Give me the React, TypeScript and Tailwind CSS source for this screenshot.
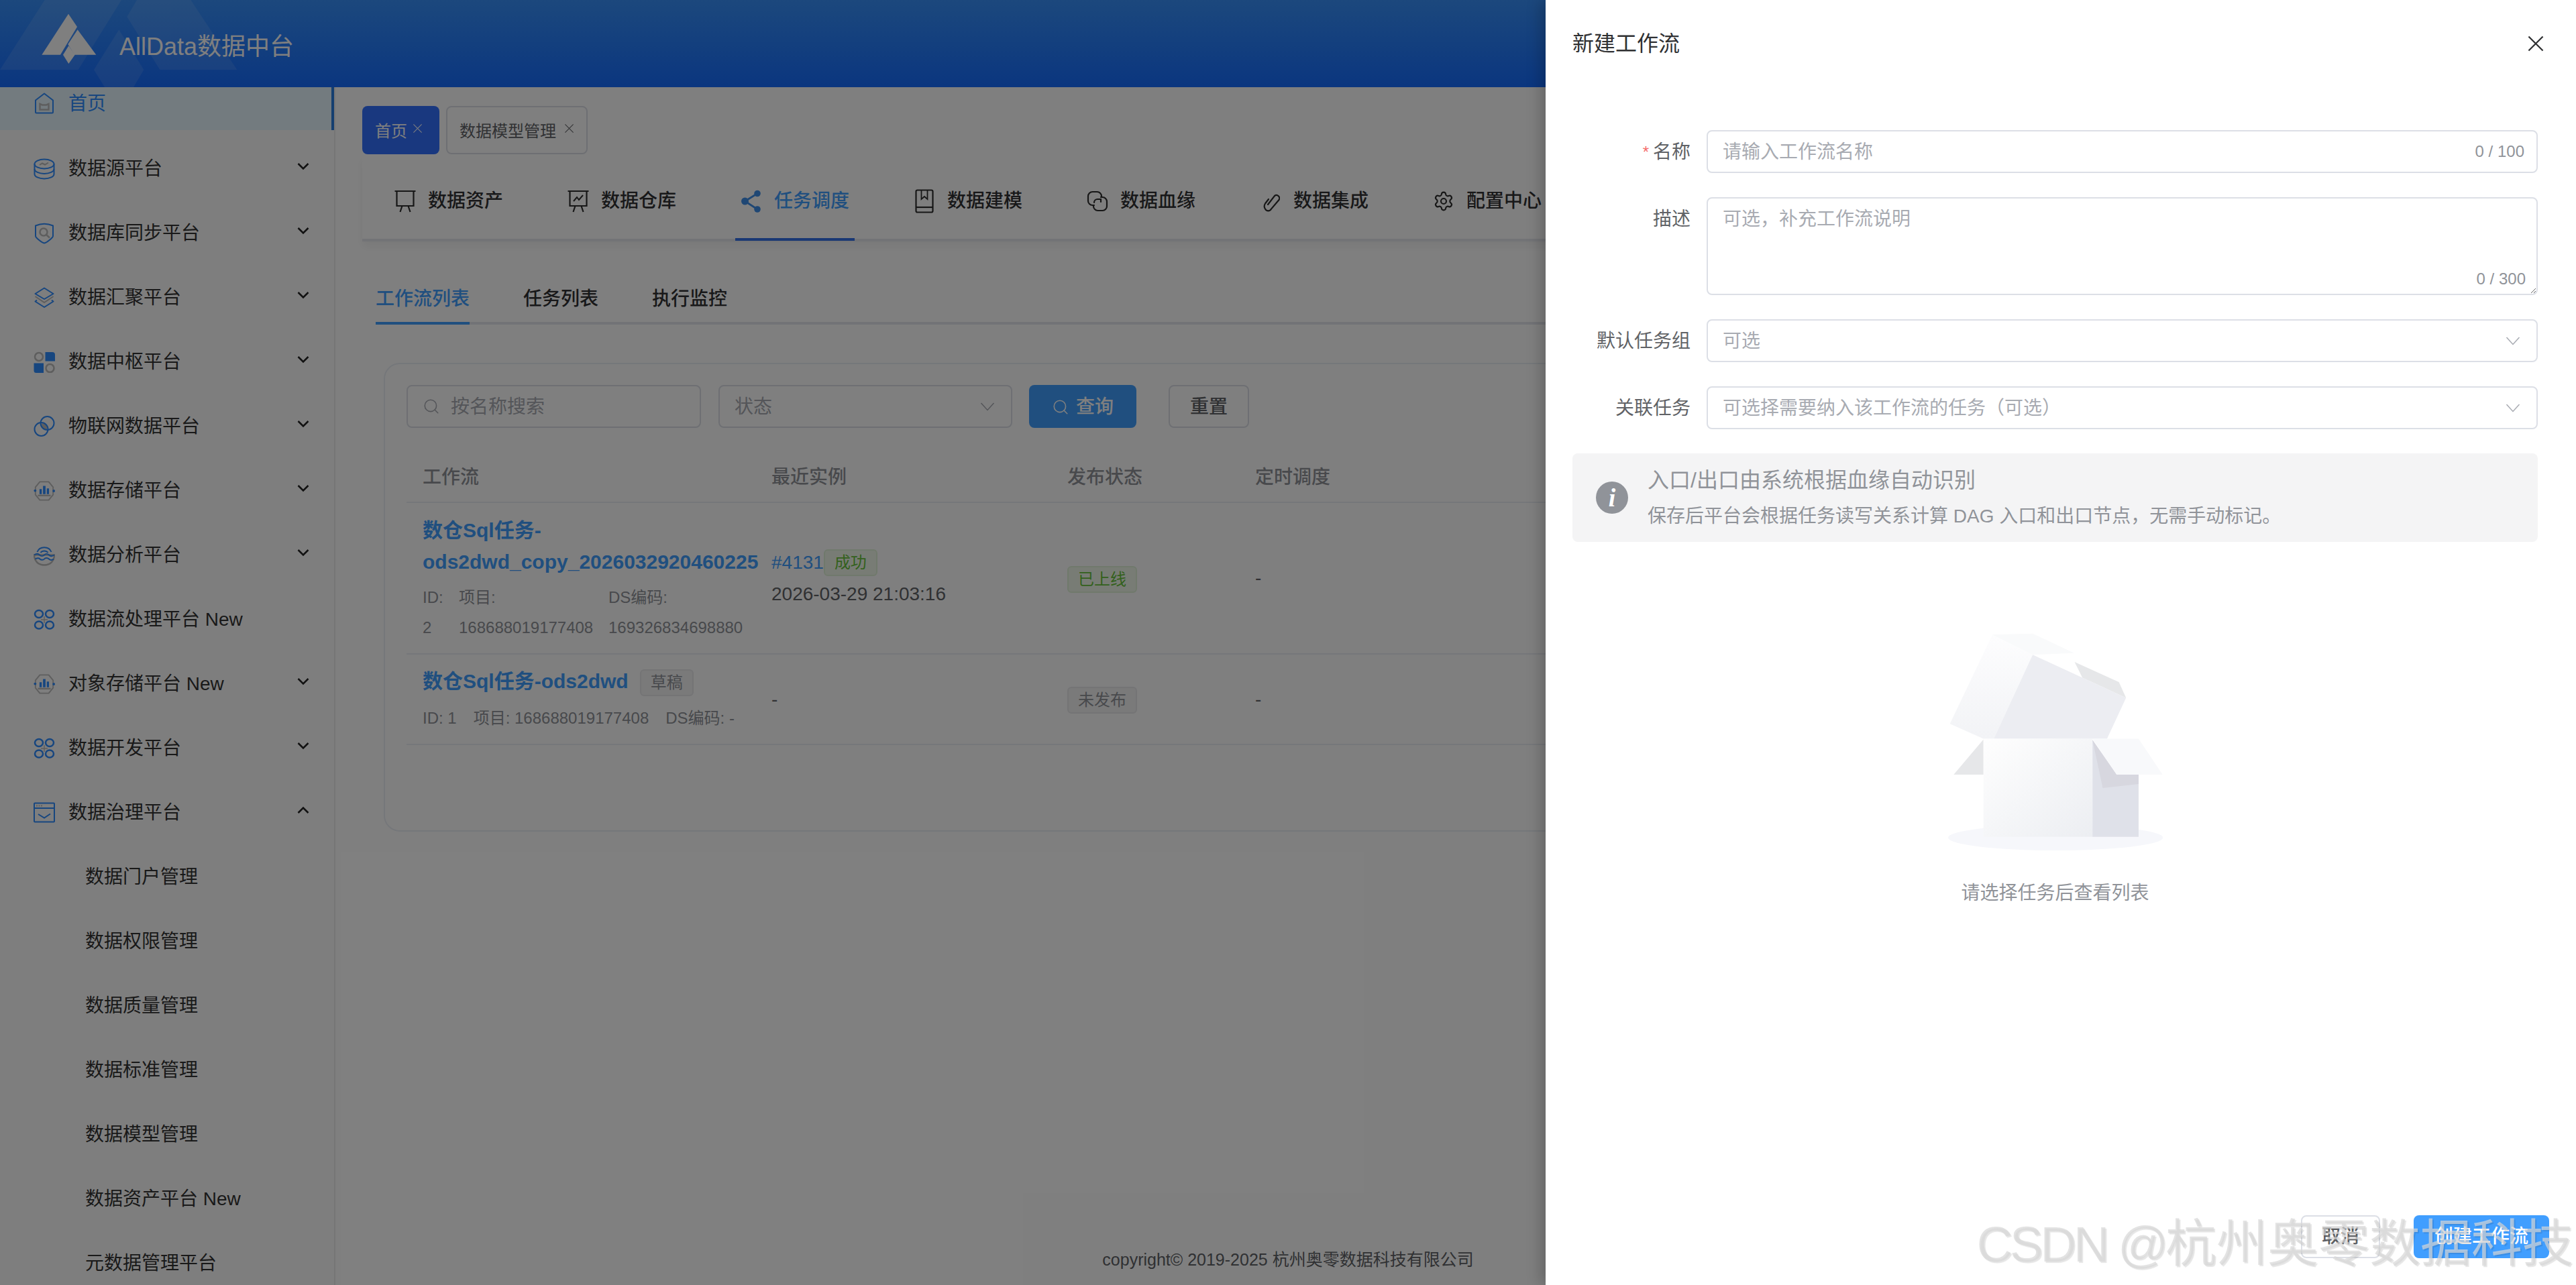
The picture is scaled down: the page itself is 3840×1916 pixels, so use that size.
import type { ReactNode } from 'react'
import { Search, Settings } from 'lucide-react'

const BLUE = '#2f8cff'
const GRAY = '#bcbcbc'

function HomeIcon() {
  return (
    <svg width="32" height="32" viewBox="0 0 32 32" fill="none" strokeWidth="2">
      <path d="M16 1.5 29 11.5V29a1.5 1.5 0 0 1-1.5 1.5h-23A1.5 1.5 0 0 1 3 29V11.5z" stroke={BLUE} strokeLinejoin="round" />
      <path d="M9.5 17l3.5 1.5h6l3.500-1.500V25.500h-13z" stroke={GRAY} strokeWidth="2.5" />
    </svg>
  )
}

function DbIcon() {
  return (
    <svg width="32" height="32" viewBox="0 0 32 32" fill="none" strokeWidth="2">
      <ellipse cx="16" cy="8.500" rx="14.500" ry="7" stroke={BLUE} />
      <path d="M1.500 8.500v7.500c0 3.900 6.500 7 14.500 7s14.500-3.100 14.500-7V8.500" stroke={BLUE} />
      <path d="M1.500 16v7.500c0 3.900 6.500 7 14.500 7s14.500-3.100 14.500-7V16" stroke={BLUE} />
      <path d="M9 10l4-2.500 4 2 5-3" stroke={GRAY} />
    </svg>
  )
}

function ShieldIcon() {
  return (
    <svg width="32" height="32" viewBox="0 0 32 32" fill="none" strokeWidth="2">
      <path d="M3 4.500C11 1 21 1 29 4.500V20c0 2-9 10-13 10.500C12 30 3 22 3 20z" stroke={BLUE} strokeLinejoin="round" />
      <circle cx="15" cy="14" r="5.500" stroke={GRAY} strokeWidth="2.500" />
      <path d="M19 18l5 4.500" stroke={GRAY} strokeWidth="2.500" />
    </svg>
  )
}

function LayersIcon() {
  return (
    <svg width="32" height="32" viewBox="0 0 32 32" fill="none" strokeWidth="2">
      <path d="M16 1.500 29.500 10 16 18 2.500 10z" stroke={BLUE} strokeLinejoin="round" />
      <path d="M2.500 14 16 23l13.500-9" stroke={GRAY} />
      <path d="M5 19.500 2.500 21.500 16 30l13.500-8.500L27 19.500" stroke={BLUE} strokeLinejoin="round" />
    </svg>
  )
}

function BlocksIcon() {
  return (
    <svg width="32" height="32" viewBox="0 0 32 32" fill="none">
      <circle cx="8" cy="8" r="6" stroke={GRAY} strokeWidth="2.500" />
      <path d="M17.500 1H28a4 4 0 0 1 4 4v9.500H17.500z" fill={BLUE} />
      <path d="M0.500 17.500H15V32H4a3.500 3.500 0 0 1-3.500-3.500z" fill={BLUE} />
      <circle cx="24.500" cy="25" r="6" stroke={GRAY} strokeWidth="2.500" />
    </svg>
  )
}

function RingsIcon() {
  return (
    <svg width="32" height="32" viewBox="0 0 32 32" fill="none" strokeWidth="2">
      <path d="M11.500 11.500c6-1.500 9 3 9 8.500-4.500 1.500-8.500-3-9-8.500z" fill={GRAY} />
      <circle cx="11.500" cy="20" r="10" stroke={BLUE} />
      <circle cx="20.500" cy="11" r="10" stroke={BLUE} />
    </svg>
  )
}

function StorageIcon() {
  return (
    <svg width="34" height="32" viewBox="0 0 34 32" fill="none" strokeWidth="2">
      <path d="M3 16V10l7-8.500h14L31 10v12l-7 8.500H10L3 22z" stroke={GRAY} strokeLinejoin="round" />
      <path d="M9.500 13h3.500v8H9.500zM15 8h4v13h-4zM21 12h3.500v9H21z" fill={BLUE} />
      <path d="M7 22h20v2.500H7z" fill={GRAY} />
      <circle cx="2.500" cy="15.500" r="2" fill={BLUE} />
      <circle cx="32" cy="16" r="2" fill={BLUE} />
    </svg>
  )
}

function WaveIcon() {
  return (
    <svg width="32" height="32" viewBox="0 0 32 32" fill="none" strokeWidth="2">
      <path d="M5.500 11C9 2 23 2 26.500 11" stroke={BLUE} />
      <path d="M10.500 12c2.500-3.500 8.500-3.500 11 0" stroke={BLUE} />
      <path d="M1 15.500h30c0 9-6 15-15 15s-15-6-15-15z" stroke={GRAY} strokeWidth="2.500" />
      <path d="M1 15.500c3-2 6-2 8 0s5 2 7 0 5-2 7 0 5 2 8 0M2.500 21.500c3-1.500 5.500-1.500 7 0s5 2 6.500 0 5-2 7 0 5 1.500 7 0" stroke={BLUE} />
    </svg>
  )
}

function FlowIcon() {
  return (
    <svg width="32" height="32" viewBox="0 0 32 32" fill="none" strokeWidth="2.500">
      <ellipse cx="8" cy="7.500" rx="6" ry="5.500" stroke={BLUE} />
      <ellipse cx="24" cy="7.500" rx="6" ry="5.500" stroke={BLUE} />
      <ellipse cx="8" cy="24" rx="6" ry="5.500" stroke={BLUE} />
      <ellipse cx="24" cy="24" rx="6" ry="5.500" stroke={BLUE} />
      <path d="M16 11v10M11 16h10" stroke={GRAY} strokeWidth="1.500" />
    </svg>
  )
}

function GovernIcon() {
  return (
    <svg width="32" height="32" viewBox="0 0 32 32" fill="none" strokeWidth="2">
      <rect x="1" y="1.500" width="30" height="28" rx="1" stroke={BLUE} />
      <path d="M1 9h30" stroke={BLUE} />
      <path d="M4 5.500h2M7.500 5.500h2M11 5.500h2" stroke={GRAY} />
      <path d="M7 18l9 5.500 9-6" stroke={BLUE} />
    </svg>
  )
}

function BoardIcon({ line }: { line?: boolean }) {
  return (
    <svg width="32" height="34" viewBox="0 0 32 34" fill="none" stroke="#2e2e2e" strokeWidth="2.200">
      <path d="M0.500 2h31M3.500 2v22h25V2" />
      <path d="M11.500 24l-3 9M20.500 24l3 9" />
      {line && <path d="M9 17l5-6 3 4 6-7" strokeWidth="2" />}
    </svg>
  )
}

function ShareIcon() {
  return (
    <svg width="30" height="34" viewBox="0 0 30 34" fill="#3f8fe8">
      <circle cx="24" cy="5.500" r="4.800" />
      <circle cx="5.500" cy="17" r="5.500" />
      <circle cx="24" cy="29" r="4.800" />
      <path d="M24 5.500 5.500 17 24 29" fill="none" stroke="#3f8fe8" strokeWidth="2.800" />
    </svg>
  )
}

function BookIcon() {
  return (
    <svg width="28" height="36" viewBox="0 0 28 36" fill="none" stroke="#2e2e2e" strokeWidth="2.200">
      <rect x="1.500" y="1.500" width="25" height="33" rx="2" />
      <path d="M1.500 27h25" />
      <path d="M9.500 2v13l4.500-4 4.500 4V2" strokeWidth="1.800" />
    </svg>
  )
}

function ChainIcon() {
  return (
    <svg width="32" height="32" viewBox="0 0 32 32" fill="none" stroke="#2e2e2e" strokeWidth="2.200" strokeLinecap="round">
      <path d="M11 22H8.500A6.500 6.500 0 0 1 2 15.500V8.500A6.500 6.500 0 0 1 8.500 2h7A6.500 6.500 0 0 1 22 8.500V10" />
      <path d="M21 10h2.500A6.500 6.500 0 0 1 30 16.500v7a6.500 6.500 0 0 1-6.500 6.500h-7a6.500 6.500 0 0 1-6.500-6.500V22" />
      <path d="M11 18a5 5 0 0 1 5-5h5v4" />
    </svg>
  )
}

function LinkIcon() {
  return (
    <svg width="28" height="32" viewBox="0 0 28 32" fill="none" stroke="#2e2e2e" strokeWidth="2.200" strokeLinecap="round">
      <path d="M10 21 20 8a4.500 4.500 0 0 1 6.500 6L15 27.500a5 5 0 0 1-9 0c-2-3-2-5 0-8l5-6.500" />
    </svg>
  )
}

function Chevron({ up }: { up?: boolean }) {
  return (
    <svg width="18" height="12" viewBox="0 0 18 12" fill="none" stroke="#222" strokeWidth="2.500">
      <path d={up ? 'M1.500 10 9 2.500 16.500 10' : 'M1.500 2 9 9.500 16.500 2'} />
    </svg>
  )
}

function ThinChevron() {
  return (
    <svg width="22" height="14" viewBox="0 0 22 14" fill="none" stroke="#a8abb2" strokeWidth="1.500">
      <path d="M1.500 2 11 12.500 20.500 2" />
    </svg>
  )
}

function ThinX({ size, weight = 1.1, className }: { size: number; weight?: number; className?: string }) {
  return (
    <svg width={size} height={size} viewBox="0 0 16 16" fill="none" stroke="currentColor" strokeWidth={weight} className={className}>
      <path d="M1.500 1.500l13 13M14.500 1.500l-13 13" />
    </svg>
  )
}

const sideItems: { label: string; icon?: ReactNode; open?: boolean; plain?: boolean }[] = [
  { label: '数据源平台', icon: <DbIcon /> },
  { label: '数据库同步平台', icon: <ShieldIcon /> },
  { label: '数据汇聚平台', icon: <LayersIcon /> },
  { label: '数据中枢平台', icon: <BlocksIcon /> },
  { label: '物联网数据平台', icon: <RingsIcon /> },
  { label: '数据存储平台', icon: <StorageIcon /> },
  { label: '数据分析平台', icon: <WaveIcon /> },
  { label: '数据流处理平台 New', icon: <FlowIcon />, plain: true },
  { label: '对象存储平台 New', icon: <StorageIcon /> },
  { label: '数据开发平台', icon: <FlowIcon /> },
  { label: '数据治理平台', icon: <GovernIcon />, open: true },
]

const subItems = ['数据门户管理', '数据权限管理', '数据质量管理', '数据标准管理', '数据模型管理', '数据资产平台 New', '元数据管理平台']

const mainTabs: { label: string; icon: ReactNode; active?: boolean }[] = [
  { label: '数据资产', icon: <BoardIcon /> },
  { label: '数据仓库', icon: <BoardIcon line /> },
  { label: '任务调度', icon: <ShareIcon />, active: true },
  { label: '数据建模', icon: <BookIcon /> },
  { label: '数据血缘', icon: <ChainIcon /> },
  { label: '数据集成', icon: <LinkIcon /> },
  { label: '配置中心', icon: <Settings size={34} strokeWidth={1.600} color="#2e2e2e" /> },
]

function Tag({ children, tone }: { children: ReactNode; tone: 'green' | 'gray' }) {
  const cls =
    tone === 'green'
      ? 'bg-[#f0f9eb] border-[#e1f3d8] text-[#67c23a]'
      : 'bg-[#f4f4f5] border-[#e9e9eb] text-[#909399]'
  return (
    <span className={`inline-flex h-10 items-center rounded-[6px] border-2 px-[14px] text-[24px] whitespace-nowrap ${cls}`}>
      {children}
    </span>
  )
}

function Sidebar() {
  return (
    <aside className="h-[1786px] w-[500px] shrink-0 overflow-hidden border-r-2 border-[#ececec] bg-[#fcfcfc]">
      <div className="-mt-4">
        <div className="mb-4 -mr-[2px] flex h-20 items-center gap-5 border-r-[6px] border-[#2a7fe0] bg-[#e6f7ff] pl-[50px] text-[28px] text-[#2f8cff]">
          <HomeIcon />
          <span className="pt-[2px]">首页</span>
        </div>
        {sideItems.map((item) => (
          <div key={item.label} className="mb-4 flex h-20 items-center gap-5 pr-[37px] pl-[50px] text-[28px] text-[#333]">
            <span className="flex w-8 justify-center pt-[3px]">{item.icon}</span>
            <span className="flex-1 pt-[3px]">{item.label}</span>
            {!item.plain && (
              <span className="-mt-1 flex">
                <Chevron up={item.open} />
              </span>
            )}
          </div>
        ))}
        {subItems.map((label) => (
          <div key={label} className="mb-4 flex h-20 items-center pt-[3px] pl-[127px] text-[28px] text-[#333]">
            {label}
          </div>
        ))}
      </div>
    </aside>
  )
}

function WorkflowCard() {
  return (
    <div className="mt-[57px] ml-[72px] h-[699px] rounded-[24px] border-2 border-[#ebeef5] px-8 pt-[31px]">
      <div className="flex h-16 items-stretch text-[28px]">
        <div className="flex w-[439px] items-center gap-[16px] rounded-[8px] border-2 border-[#dcdfe6] pl-[22px] text-[#a8abb2]">
          <Search size={26} strokeWidth={1.500} />
          <span className="pt-[2px]">按名称搜索</span>
        </div>
        <div className="ml-[26px] flex w-[438px] items-center justify-between rounded-[8px] border-2 border-[#dcdfe6] pr-[24px] pl-[22px] text-[#a8abb2]">
          <span className="pt-[2px]">状态</span>
          <ThinChevron />
        </div>
        <button className="ml-[25px] flex w-40 items-center justify-center gap-[10px] rounded-[8px] bg-[#409eff] pt-[2px] font-medium text-white">
          <Search size={26} strokeWidth={1.500} />
          查询
        </button>
        <button className="ml-12 w-[120px] rounded-[8px] border-2 border-[#dcdfe6] pt-[2px] font-medium text-[#606266]">重置</button>
      </div>

      <div className="grid h-[112px] grid-cols-[520px_441px_280px_1fr] items-center border-b-2 border-[#ebeef5] pt-[38px] text-[28px] font-medium text-[#909399]">
        <div className="pl-6">工作流</div>
        <div className="pl-6">最近实例</div>
        <div className="pl-6">发布状态</div>
        <div className="pl-6">定时调度</div>
      </div>

      <div className="grid h-[226px] grid-cols-[520px_441px_280px_1fr] items-center border-b-2 border-[#ebeef5]">
        <div className="pl-6">
          <div className="text-[30px] leading-[47px] font-bold text-[#409eff]">数仓Sql任务-ods2dwd_copy_2026032920460225</div>
          <div className="mt-[7px] flex gap-6 text-[24px] leading-[45px] text-[#909399]">
            <div className="w-[30px]">ID:<br />2</div>
            <div className="w-[199px]">项目:<br />168688019177408</div>
            <div>DS编码:<br />169326834698880</div>
          </div>
        </div>
        <div className="pl-6">
          <div className="flex items-center text-[28px] text-[#409eff]">
            #4131
            <Tag tone="green">成功</Tag>
          </div>
          <div className="mt-[6px] text-[28px] leading-10 text-[#606266]">2026-03-29 21:03:16</div>
        </div>
        <div className="pt-[4px] pl-6">
          <Tag tone="green">已上线</Tag>
        </div>
        <div className="pl-6 text-[28px] text-[#606266]">-</div>
      </div>

      <div className="grid h-[135px] grid-cols-[520px_441px_280px_1fr] items-center border-b-2 border-[#ebeef5]">
        <div className="pl-6">
          <div className="flex items-center gap-[17px] text-[30px] leading-[47px] font-bold text-[#409eff]">
            数仓Sql任务-ods2dwd
            <span className="font-normal">
              <Tag tone="gray">草稿</Tag>
            </span>
          </div>
          <div className="mt-[9px] flex gap-[25px] text-[24px] leading-[45px] text-[#909399]">
            <span>ID: 1</span>
            <span>项目: 168688019177408</span>
            <span>DS编码: -</span>
          </div>
        </div>
        <div className="pl-6 text-[28px] text-[#606266]">-</div>
        <div className="pt-[3px] pl-6">
          <Tag tone="gray">未发布</Tag>
        </div>
        <div className="pl-6 text-[28px] text-[#606266]">-</div>
      </div>
    </div>
  )
}

function MainArea() {
  return (
    <main className="flex h-[1786px] flex-1 flex-col bg-white">
      <div className="mt-7 ml-10 flex h-[72px] gap-[10px] text-[24px]">
        <div className="flex w-[115px] items-center justify-center gap-2 rounded-[8px] bg-[#3370ff] pt-[3px] pr-[6px] text-white">
          首页
          <ThinX size={15} className="-mt-2" />
        </div>
        <div className="flex w-[211px] items-center justify-center gap-3 rounded-[8px] border-2 border-[#dcdfe6] pt-[3px] text-[#606266]">
          数据模型管理
          <ThinX size={15} className="-mt-2" />
        </div>
      </div>

      <div className="ml-10 flex h-[130px] gap-20 border-b-4 border-[#e4e7ed] pl-10 shadow-[0_8px_12px_rgba(0,0,0,0.05)]">
        {mainTabs.map((tab) => (
          <div
            key={tab.label}
            className={`flex h-[129px] w-[178px] shrink-0 items-start justify-center gap-[18px] pt-[50px] text-[28px] leading-10 font-medium whitespace-nowrap ${
              tab.active ? 'border-b-4 border-[#3370e8] text-[#409eff]' : 'text-[#303133]'
            }`}
          >
            <span className="flex h-10 w-8 items-center justify-center">{tab.icon}</span>
            {tab.label}
          </div>
        ))}
      </div>

      <div className="mt-16 ml-[60px] flex h-[60px] gap-20 border-b-4 border-[#e4e7ed] pt-[2px] text-[28px] leading-10 font-medium text-[#303133]">
        <div className="h-[58px] border-b-4 border-[#409eff] text-[#409eff]">工作流列表</div>
        <div>任务列表</div>
        <div>执行监控</div>
      </div>

      <WorkflowCard />

      <footer className="mt-auto pr-[500px] pb-[19px] text-center text-[25px] leading-[38px] text-[#606266]">
        copyright© 2019-2025 杭州奥零数据科技有限公司
      </footer>
    </main>
  )
}

function EmptyBox() {
  return (
    <svg width="327" height="327" viewBox="300 130 980 980">
      <defs>
        <linearGradient id="lid" x1="0" y1="0" x2="0" y2="1">
          <stop offset="0" stopColor="#fdfdfe" />
          <stop offset="1" stopColor="#f2f3f6" />
        </linearGradient>
        <linearGradient id="front" x1="0" y1="0" x2="1" y2="1">
          <stop offset="0" stopColor="#fefefe" />
          <stop offset="1" stopColor="#eceef2" />
        </linearGradient>
      </defs>
      <ellipse cx="792" cy="1047" rx="480" ry="57" fill="#f6f7fb" />
      <polygon points="510,140 690,230 516,605 470,605 320,538" fill="url(#lid)" />
      <polygon points="510,140 690,135 875,222 690,230" fill="#f9fafb" />
      <polygon points="877,262 1075,352 1107,422 912,332" fill="#e6e7e9" />
      <polygon points="690,230 1107,422 1022,605 516,605" fill="#ecedf2" />
      <polygon points="470,608 470,765 337,765" fill="#e6e7e9" />
      <polygon points="470,605 957,605 957,1043 470,1043" fill="url(#front)" />
      <polygon points="957,610 1065,765 1163,765 1163,1043 957,1043" fill="#dfe1e9" />
      <polygon points="957,610 1065,765 1163,765 1163,807 1003,825" fill="#d7d7df" />
      <polygon points="957,605 1163,605 1270,765 1065,765" fill="#f8f9fb" />
    </svg>
  )
}

function FormRow({ label, required, children }: { label: string; required?: boolean; children: ReactNode }) {
  return (
    <div className="mb-9 flex items-start gap-6">
      <label className="flex h-16 w-[176px] shrink-0 items-center justify-end pt-[2px] text-[28px] text-[#606266]">
        {required && <span className="mr-[6px] text-[24px] text-[#f56c6c]">*</span>}
        {label}
      </label>
      <div className="relative flex-1">{children}</div>
    </div>
  )
}

function SelectBox({ text }: { text: string }) {
  return (
    <div className="flex h-16 items-center justify-between rounded-[8px] border-2 border-[#dcdfe6] pr-6 pl-[22px] text-[28px] text-[#a8abb2]">
      <span className="pt-[2px]">{text}</span>
      <ThinChevron />
    </div>
  )
}

function Drawer() {
  return (
    <section className="absolute top-0 right-0 flex h-[1916px] w-[1536px] flex-col bg-white shadow-[-8px_0_20px_rgba(0,0,0,0.2)]">
      <div className="flex h-[130px] shrink-0 items-center justify-between pr-[47px] pl-10 text-[32px] text-[#303133]">
        <span>新建工作流</span>
        <ThinX size={26} weight={1.4} className="text-[#303133]" />
      </div>
      <div className="pt-16 pr-[57px] pl-10">
        <FormRow label="名称" required>
          <input
            readOnly
            placeholder="请输入工作流名称"
            className="h-16 w-full rounded-[8px] border-2 border-[#dcdfe6] pt-[2px] pr-[120px] pl-[22px] text-[28px] outline-none placeholder:text-[#a8abb2]"
          />
          <span className="absolute top-[18px] right-[20px] text-[24px] leading-7 text-[#909399]">0 / 100</span>
        </FormRow>
        <FormRow label="描述">
          <textarea
            readOnly
            placeholder="可选，补充工作流说明"
            className="block h-[146px] w-full rounded-[8px] border-2 border-[#dcdfe6] px-[22px] py-[11px] text-[28px] leading-10 outline-none placeholder:text-[#a8abb2]"
          />
          <span className="absolute right-[18px] bottom-[10px] text-[24px] leading-7 text-[#909399]">0 / 300</span>
        </FormRow>
        <FormRow label="默认任务组">
          <SelectBox text="可选" />
        </FormRow>
        <FormRow label="关联任务">
          <SelectBox text="可选择需要纳入该工作流的任务（可选）" />
        </FormRow>
        <div className="flex h-[132px] items-center gap-[29px] rounded-[8px] bg-[#f4f4f5] pl-[35px] text-[#909399]">
          <span className="flex h-12 w-12 items-center justify-center rounded-full bg-[#909399] font-['Liberation_Serif',serif] text-[38px] font-bold text-white italic">
            i
          </span>
          <div>
            <div className="text-[32px] leading-[44px]">入口/出口由系统根据血缘自动识别</div>
            <div className="mt-[12px] text-[28px] leading-10">保存后平台会根据任务读写关系计算 DAG 入口和出口节点，无需手动标记。</div>
          </div>
        </div>
        <div className="mt-[135px] flex flex-col items-center">
          <EmptyBox />
          <div className="mt-[42px] text-[28px] leading-10 text-[#909399]">请选择任务后查看列表</div>
        </div>
      </div>
      <div className="mt-auto flex justify-end gap-[50px] pr-10 pb-10 text-[28px]">
        <button className="h-16 w-[118px] rounded-[8px] border-2 border-[#dcdfe6] font-medium text-[#606266]">取消</button>
        <button className="h-16 w-[202px] rounded-[8px] bg-[#409eff] font-medium text-white">创建工作流</button>
      </div>
    </section>
  )
}

export default function App() {
  return (
    <div className="relative h-[1916px] w-full overflow-hidden bg-white [font-family:'Liberation_Sans','Noto_Sans_CJK_SC',sans-serif]">
      <header className="relative flex h-[130px] items-center bg-linear-to-b from-[#3890fa] to-[#166cff] pt-[10px] pl-[178px] text-[36px] text-white">
        <svg className="absolute top-0 left-0" width="520" height="130" viewBox="0 0 1560 390" fill="#fff">
          <g opacity="0.1">
            <polygon points="200,0 543,0 350,312 0,312" />
            <polygon points="612,0 853,0 1060,312 715,312 568,75" />
            <polygon points="532,133 643,312 597,390 468,390 420,312" />
          </g>
          <polygon points="306,62 345,120 270,245 187,245" />
          <polygon points="347,133 430,245 333,245 304,198" />
          <polygon points="307,205 335,245 307,285 282,245" />
        </svg>
        <span className="relative">AllData数据中台</span>
      </header>
      <div className="flex">
        <Sidebar />
        <MainArea />
      </div>
      <div className="absolute inset-0 bg-black/50" />
      <Drawer />
      <div className="pointer-events-none absolute right-[4px] bottom-[12px] text-[76px] leading-[96px] whitespace-nowrap text-[rgba(215,215,215,0.7)] [text-shadow:2px_2px_1px_rgba(0,0,0,0.1)]">
        <span className="text-[74px] tracking-[-4px]">CSDN @</span>杭州奥零数据科技
      </div>
    </div>
  )
}
